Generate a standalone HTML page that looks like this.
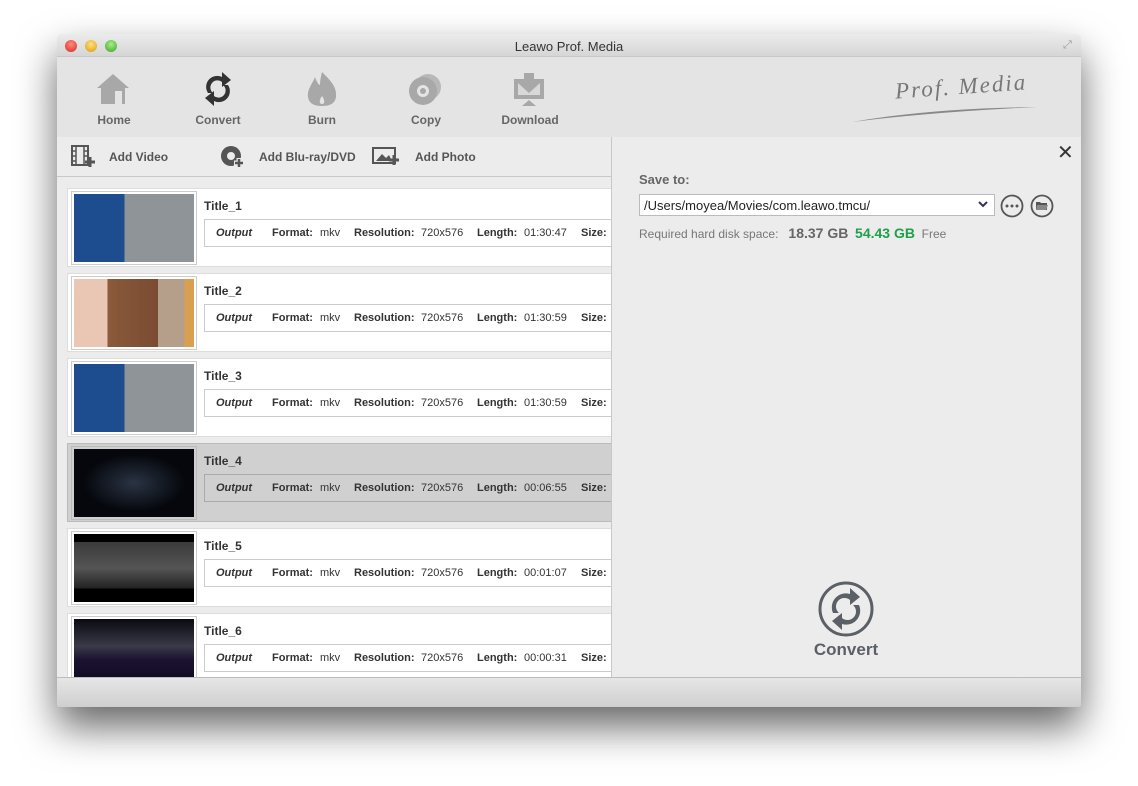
<!DOCTYPE html><html><head><style>
*{margin:0;padding:0;box-sizing:border-box}
body{width:1138px;height:786px;background:#fff;font-family:"Liberation Sans",sans-serif;position:relative;overflow:hidden}
.a{position:absolute}
.win{left:57px;top:34px;width:1024px;height:673px;background:#ececec;box-shadow:0 20px 40px rgba(0,0,0,.6);border-radius:5px 5px 3px 3px;overflow:hidden}
.tb{font-weight:bold;font-size:12px;color:#666;text-align:center;width:80px}
.row{left:10px;width:545px;height:79px;background:#fff;border:1px solid #ddd;border-right:none}
.row.sel{background:#d0d0d0;border-color:#bbb}
.th{left:3px;top:2px;width:126px;height:74px;border:1px solid #ccc;padding:2px;background:#fff}
.th div{width:100%;height:100%}
.ti{left:136px;top:10px;font-size:12px;font-weight:bold;color:#333}
.ob{left:136px;top:30px;width:420px;height:28px;border:1px solid #ccc;border-right:none;font-size:11px;color:#333;white-space:nowrap}
.ob span{position:absolute;top:7px}
</style></head><body>
<div class="a win">
 <div class="a" style="left:0;top:0;width:1024px;height:23px;background:linear-gradient(#ececec,#d6d6d6);border-bottom:1px solid #c8c8c8"></div>
 <div class="a" style="left:8px;top:6px;width:12px;height:12px;border-radius:50%;background:radial-gradient(circle at 50% 35%,#ff8a80,#d52a1f)"></div>
 <div class="a" style="left:28px;top:6px;width:12px;height:12px;border-radius:50%;background:radial-gradient(circle at 50% 35%,#ffe27a,#d99a10)"></div>
 <div class="a" style="left:48px;top:6px;width:12px;height:12px;border-radius:50%;background:radial-gradient(circle at 50% 35%,#a8ee88,#3ba424)"></div>
 <div class="a" style="left:0;width:1024px;top:5px;text-align:center;font-size:13px;color:#333">Leawo Prof. Media</div>
 <div class="a" style="left:1006px;top:5px;font-size:11px;color:#999">⤢</div>
 <div class="a" style="left:0;top:23px;width:1024px;height:80px;background:#e4e4e4"></div>
 <svg class="a" style="left:38px;top:38px" width="36" height="34"><path d="M18 2 L2 16 L6 16 L6 32 L30 32 L30 16 L34 16 Z" fill="#a8a8a8"/><rect x="20" y="19" width="7" height="13" fill="#e4e4e4"/></svg>
 <svg class="a" style="left:145px;top:37px" width="32" height="36"><path d="M6 22 A11 11 0 0 1 20 6 L20 1 L29 9 L20 16 L20 11 A7 7 0 0 0 11 22 Z" fill="#333"/><path d="M26 14 A11 11 0 0 1 12 30 L12 35 L3 27 L12 20 L12 25 A7 7 0 0 0 21 14 Z" fill="#333"/></svg>
 <svg class="a" style="left:248px;top:37px" width="34" height="36"><path d="M17 1 C26 10 32 16 31 26 C30 33 24 35 17 35 C10 35 4 33 3 26 C2 18 8 12 10 6 C12 12 14 14 15 14 C15 9 16 5 17 1Z" fill="#a8a8a8"/><path d="M17 25 C20 29 20 33 17 33 C14 33 14 29 17 25Z" fill="#e4e4e4"/></svg>
 <svg class="a" style="left:350px;top:38px" width="36" height="34"><circle cx="21" cy="15" r="13" fill="#b8b8b8"/><circle cx="16" cy="19" r="14" fill="#a8a8a8"/><circle cx="16" cy="19" r="6" fill="#e4e4e4"/><circle cx="16" cy="19" r="3" fill="#a8a8a8"/></svg>
 <svg class="a" style="left:455px;top:37px" width="34" height="36"><rect x="2" y="8" width="30" height="20" fill="#a8a8a8"/><rect x="6" y="12" width="22" height="12" fill="#d8d8d8"/><path d="M12 2 H22 V12 H28 L17 22 L6 12 H12 Z" fill="#a8a8a8"/><path d="M10 35 L17 29 L24 35 Z" fill="#a8a8a8"/></svg>
 <div class="a tb" style="left:17px;top:79px">Home</div>
 <div class="a tb" style="left:121px;top:79px">Convert</div>
 <div class="a tb" style="left:225px;top:79px">Burn</div>
 <div class="a tb" style="left:329px;top:79px">Copy</div>
 <div class="a tb" style="left:433px;top:79px">Download</div>
 <div class="a" style="left:838px;top:40px;font-family:'Liberation Serif',serif;font-style:italic;font-size:23px;color:#777;letter-spacing:2px;transform:rotate(-4deg)">Prof. Media</div>
 <svg class="a" style="left:795px;top:70px" width="190" height="20"><path d="M0 18 Q80 4 185 3 Q80 8 0 18Z" fill="#888"/></svg>
 <div class="a" style="left:0;top:103px;width:555px;height:40px;background:#ececec;border-bottom:1px solid #c8c8c8"></div>
 <svg class="a" style="left:14px;top:111px" width="24" height="22"><rect x="1" y="1" width="16" height="19" fill="none" stroke="#555" stroke-width="2"/><path d="M5 1V20M13 1V20M1 6H5M1 11H5M1 16H5M13 6H17M13 11H17" stroke="#555" stroke-width="1.5"/><path d="M19 12V22M14 17H24" stroke="#555" stroke-width="3"/></svg>
 <div class="a" style="left:52px;top:116px;font-size:12px;font-weight:bold;color:#555">Add Video</div>
 <svg class="a" style="left:164px;top:111px" width="24" height="22"><circle cx="10" cy="11" r="10" fill="#555"/><circle cx="10" cy="11" r="4" fill="#ececec"/><path d="M18 13V23M13 18H23" stroke="#ececec" stroke-width="5"/><path d="M18 14V22M14 18H22" stroke="#555" stroke-width="2.5"/></svg>
 <div class="a" style="left:202px;top:116px;font-size:12px;font-weight:bold;color:#555">Add Blu-ray/DVD</div>
 <svg class="a" style="left:315px;top:111px" width="28" height="22"><rect x="1" y="3" width="22" height="15" fill="none" stroke="#555" stroke-width="2"/><path d="M4 16 L10 9 L14 13 L17 10 L20 16Z" fill="#555"/><path d="M22 10V20M17 15H27" stroke="#555" stroke-width="3"/></svg>
 <div class="a" style="left:358px;top:116px;font-size:12px;font-weight:bold;color:#555">Add Photo</div>
 <div class="a" style="left:554px;top:103px;width:1px;height:540px;background:#c8c8c8"></div>
 <div class="a" style="left:0;top:144px;width:554px;height:499px;overflow:hidden">
  <div class="a row" style="top:10px"><div class="a th"><div style="background:linear-gradient(90deg,#1d4d8e 42%,#8e9497 42%)"></div></div><div class="a ti">Title_1</div><div class="a ob"><span style="left:11px"><i><b>Output</b></i></span><span style="left:67px"><b>Format:</b></span><span style="left:115px">mkv</span><span style="left:149px"><b>Resolution:</b></span><span style="left:216px">720x576</span><span style="left:272px"><b>Length:</b></span><span style="left:319px">01:30:47</span><span style="left:376px"><b>Size:</b></span></div></div>
  <div class="a row" style="top:95px"><div class="a th"><div style="background:linear-gradient(90deg,#eac7b4 28%,#8a5a3a 28%,#7a4b32 70%,#b59e8a 70%,#b59e8a 92%,#d8a050 92%)"></div></div><div class="a ti">Title_2</div><div class="a ob"><span style="left:11px"><i><b>Output</b></i></span><span style="left:67px"><b>Format:</b></span><span style="left:115px">mkv</span><span style="left:149px"><b>Resolution:</b></span><span style="left:216px">720x576</span><span style="left:272px"><b>Length:</b></span><span style="left:319px">01:30:59</span><span style="left:376px"><b>Size:</b></span></div></div>
  <div class="a row" style="top:180px"><div class="a th"><div style="background:linear-gradient(90deg,#1d4d8e 42%,#8e9497 42%)"></div></div><div class="a ti">Title_3</div><div class="a ob"><span style="left:11px"><i><b>Output</b></i></span><span style="left:67px"><b>Format:</b></span><span style="left:115px">mkv</span><span style="left:149px"><b>Resolution:</b></span><span style="left:216px">720x576</span><span style="left:272px"><b>Length:</b></span><span style="left:319px">01:30:59</span><span style="left:376px"><b>Size:</b></span></div></div>
  <div class="a row sel" style="top:265px"><div class="a th" style="background:#d0d0d0;border-color:#bbb"><div style="background:radial-gradient(ellipse at 50% 50%,#2a3444,#05070c 60%)"></div></div><div class="a ti">Title_4</div><div class="a ob" style="border-color:#aaa"><span style="left:11px"><i><b>Output</b></i></span><span style="left:67px"><b>Format:</b></span><span style="left:115px">mkv</span><span style="left:149px"><b>Resolution:</b></span><span style="left:216px">720x576</span><span style="left:272px"><b>Length:</b></span><span style="left:319px">00:06:55</span><span style="left:376px"><b>Size:</b></span></div></div>
  <div class="a row" style="top:350px"><div class="a th"><div style="background:linear-gradient(#000 12%,#3a3a3a 12%,#555 50%,#222 80%,#000 80%)"></div></div><div class="a ti">Title_5</div><div class="a ob"><span style="left:11px"><i><b>Output</b></i></span><span style="left:67px"><b>Format:</b></span><span style="left:115px">mkv</span><span style="left:149px"><b>Resolution:</b></span><span style="left:216px">720x576</span><span style="left:272px"><b>Length:</b></span><span style="left:319px">00:01:07</span><span style="left:376px"><b>Size:</b></span></div></div>
  <div class="a row" style="top:435px"><div class="a th"><div style="background:linear-gradient(#0a0a10,#3a3a48 40%,#1a1230 60%,#100820)"></div></div><div class="a ti">Title_6</div><div class="a ob"><span style="left:11px"><i><b>Output</b></i></span><span style="left:67px"><b>Format:</b></span><span style="left:115px">mkv</span><span style="left:149px"><b>Resolution:</b></span><span style="left:216px">720x576</span><span style="left:272px"><b>Length:</b></span><span style="left:319px">00:00:31</span><span style="left:376px"><b>Size:</b></span></div></div>
 </div>
 <div class="a" style="left:1000px;top:106px;font-size:20px;color:#333">✕</div>
 <div class="a" style="left:582px;top:138px;font-size:13px;font-weight:bold;color:#666">Save to:</div>
 <div class="a" style="left:582px;top:160px;width:356px;height:22px;background:#fff;border:1px solid #bbb;font-size:13px;color:#222;padding:3px 4px">/Users/moyea/Movies/com.leawo.tmcu/</div>
 <svg class="a" style="left:920px;top:166px" width="12" height="10"><path d="M2 2 L6 6 L10 2" stroke="#335" stroke-width="2" fill="none"/></svg>
 <svg class="a" style="left:943px;top:160px" width="24" height="24"><circle cx="12" cy="12" r="10.5" fill="none" stroke="#555" stroke-width="1.8"/><circle cx="7" cy="12" r="1.5" fill="#555"/><circle cx="12" cy="12" r="1.5" fill="#555"/><circle cx="17" cy="12" r="1.5" fill="#555"/></svg>
 <svg class="a" style="left:973px;top:160px" width="24" height="24"><circle cx="12" cy="12" r="10.5" fill="none" stroke="#555" stroke-width="1.8"/><path d="M6 8H10L11 9H17V16H6Z" fill="#555"/><path d="M7 11H18L16 16H6Z" fill="#888"/></svg>
 <div class="a" style="left:582px;top:191px;font-size:12px;color:#777;white-space:nowrap">Required hard disk space:&nbsp;&nbsp; <b style="font-size:14px;color:#666">18.37 GB</b>&nbsp; <b style="font-size:14px;color:#1e9f4a">54.43 GB</b>&nbsp; Free</div>
 <svg class="a" style="left:760px;top:546px" width="58" height="58"><circle cx="29" cy="29" r="26" fill="none" stroke="#5b5f66" stroke-width="3"/><path d="M16 33 A14 14 0 0 1 33 14 L33 8 L43 17 L33 25 L33 20 A8 8 0 0 0 22 33 Z" fill="#5b5f66"/><path d="M42 25 A14 14 0 0 1 25 44 L25 50 L15 41 L25 33 L25 38 A8 8 0 0 0 36 25 Z" fill="#5b5f66"/></svg>
 <div class="a" style="left:740px;top:606px;width:98px;text-align:center;font-size:17px;font-weight:bold;color:#5b5f66">Convert</div>
 <div class="a" style="left:0;top:643px;width:1024px;height:30px;background:linear-gradient(#e6e6e6,#cfcfcf);border-top:1px solid #bbb"></div>
</div>
</body></html>
